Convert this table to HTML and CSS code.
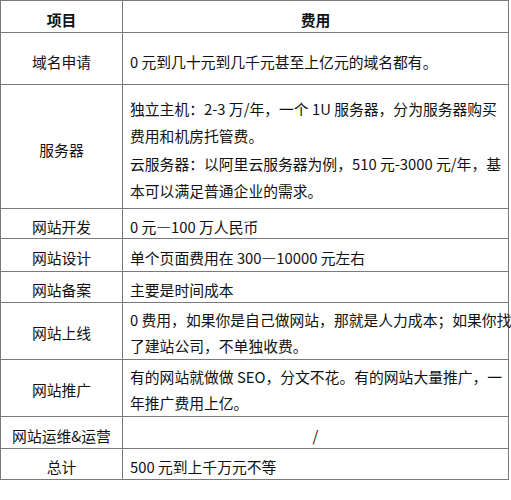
FILE: index.html
```html
<!DOCTYPE html>
<html lang="zh-CN">
<head>
<meta charset="utf-8">
<title>网站费用</title>
<link rel="stylesheet" href="styles.css">
</head>
<body>
<table class="cost">
  <colgroup><col class="c1"><col class="c2"></colgroup>
  <tr class="r-head"><th>项目</th><th>费用</th></tr>
  <tr class="r-domain"><td class="name">域名申请</td><td class="val">0 元到几十元到几千元甚至上亿元的域名都有。</td></tr>
  <tr class="r-server multi"><td class="name">服务器</td><td class="val">独立主机：2-3 万/年，一个 1U 服务器，分为服务器购买<br>费用和机房托管费。<br>云服务器：以阿里云服务器为例，510 元-3000 元/年，基<br>本可以满足普通企业的需求。</td></tr>
  <tr class="r-dev"><td class="name">网站开发</td><td class="val">0 元—100 万人民币</td></tr>
  <tr class="r-design"><td class="name">网站设计</td><td class="val">单个页面费用在 300—10000 元左右</td></tr>
  <tr class="r-icp"><td class="name">网站备案</td><td class="val">主要是时间成本</td></tr>
  <tr class="r-live two"><td class="name">网站上线</td><td class="val">0 费用，如果你是自己做网站，那就是人力成本；如果你找<br>了建站公司，不单独收费。</td></tr>
  <tr class="r-promo two"><td class="name">网站推广</td><td class="val">有的网站就做做 SEO，分文不花。有的网站大量推广，一<br>年推广费用上亿。</td></tr>
  <tr class="r-ops"><td class="name">网站运维&amp;运营</td><td class="val center">/</td></tr>
  <tr class="r-total"><td class="name">总计</td><td class="val">500 元到上千万元不等</td></tr>
</table>
</body>
</html>
```

FILE: styles.css
```css
html, body {
  margin: 0;
  padding: 0;
  background: #ffffff;
}

body {
  font-family: "Noto Sans CJK SC", "Noto Sans", sans-serif;
  font-size: 14.8px;
  color: #111111;
}

.cost {
  border-collapse: collapse;
  table-layout: fixed;
  width: 509px;
}

.c1 { width: 122px; }

.cost th,
.cost td {
  border: 1px solid #7a7a7a;
  padding: 6px 2px 0 7px;
  line-height: 22px;
  vertical-align: middle;
  white-space: nowrap;
}

.cost .name,
.cost th {
  padding-right: 7px;
}

.cost .multi td {
  line-height: 27.3px;
}

.cost .two td {
  line-height: 26px;
  padding-top: 3px;
}

.cost th {
  font-weight: 700;
  text-align: center;
}

.name { text-align: center; }
.val { text-align: left; }
.val.center { text-align: center; padding-right: 7px; }

.r-head   { height: 32px; }
.r-domain { height: 52px; }
.r-server { height: 124px; }
.r-dev    { height: 30px; }
.r-design { height: 33px; }
.r-icp    { height: 31px; }
.r-live   { height: 57px; }
.r-promo  { height: 57px; }
.r-ops    { height: 32px; }
.r-total  { height: 31px; }
```
